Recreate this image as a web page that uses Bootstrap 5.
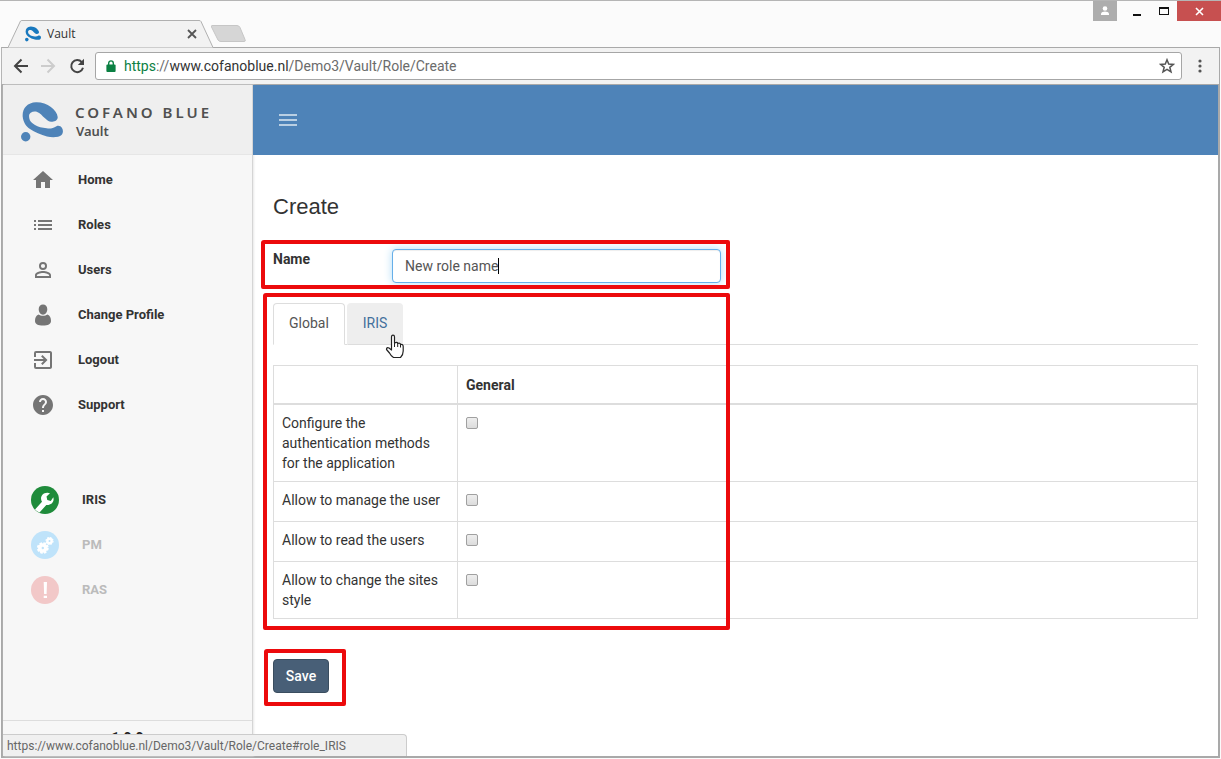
<!DOCTYPE html>
<html lang="en">
<head>
<meta charset="utf-8">
<meta name="viewport" content="width=device-width, initial-scale=1">
<title>Vault</title>
<link href="https://cdn.jsdelivr.net/npm/bootstrap@5.3.0/dist/css/bootstrap.min.css" rel="stylesheet">
<style>
  :root { --ui: "Open Sans", "Noto Sans", sans-serif; --line: #ddd; }
  body { font: 14px/20px Roboto, "Liberation Sans", sans-serif; color: #333; background: #fbfbfb; }
  svg { display: block; flex: none; }
  button { border: 0; background: none; padding: 0; }

  /* browser frame */
  .title-strip { height: 47px; border-top: 1px solid #b5b5b5; padding-left: 8px; font-family: var(--ui); }
  .browser-tab { width: 206px; height: 28px; padding: 0 17px; gap: 6px; font-size: 12px; position: relative; z-index: 1; margin: 0 -3px -1px 0; }
  .tab-shape { position: absolute; inset: 0; z-index: -1; }
  .win-btn { height: 20px; display: flex; align-items: center; justify-content: center; }
  .win-user { width: 24px; background: #adadad; margin-right: 6px; }
  .win-plain { width: 27px; }
  .win-close { width: 44px; background: #c75050; }
  .tool-strip { height: 38px; background: #f2f2f2; border: 1px solid #a9a9a9; border-left-color: #b5b5b5; padding: 0 9px 0 11px; margin: 0 1px; gap: 10px; }
  .nav-keys { gap: 13px; }
  .menu-dots { margin: 0 4px 0 2px; }
  .address { height: 28px; background: #fff; border: 1px solid #a6a6a6; border-radius: 3px; padding: 0 6px 0 10px; font: 14px/20px Roboto, sans-serif; color: #6b6b6b; }
  .address .secure { color: #0b8043; }
  .address .host { color: #333; }
  .viewport { border: solid #a9a9a9; border-width: 0 2px 2px 2px; margin: 0 1px 1px; background: #fff; position: relative; }

  /* application */
  .side { width: 250px; background: #f7f7f7; border-right: 1px solid #d5d5d5; box-shadow: 1px 0 2px #e8e8e8; font-size: 13px; font-weight: 700; }
  .brand { height: 70px; background: #efefef; border-bottom: 1px solid #e6e6e6; padding: 4px 0 0 18px; gap: 12px; color: #505050; }
  .brand-name { font: 600 15px/19px "Noto Sans", "Open Sans", sans-serif; letter-spacing: 3px; }
  .brand-app { font: 600 13px/19px "Noto Sans", "Open Sans", sans-serif; padding-left: 1px; }
  .menu-group { padding: 2px 0 50px; }
  .menu-link { height: 45px; display: flex; align-items: center; color: #333; text-decoration: none; padding-left: 28px; gap: 23px; }
  .menu-link svg { fill: #757575; }
  .menu-link.faded { color: #bbb; }
  .menu-link.app { padding-left: 27px; gap: 22px; }
  .side-foot { height: 36px; border-top: 1px solid #ddd; font: 700 14px/20px Roboto, sans-serif; color: #222; padding-top: 7px; }
  .top-bar { height: 70px; background: #4e83b8; padding-left: 25px; }
  .content-area { padding: 39px 20px 40px 20px; }
  h1 { font: 22px/26px "Liberation Sans", sans-serif; margin: 0; }
  .name-row { margin-top: 29px; width: 448px; position: relative; }
  .name-row label { width: 119px; font-weight: 700; line-height: 20px; }
  .name-row .form-control { width: 329px; height: 34px; font-size: 14px; line-height: 20px; color: #555; padding: 6px 12px; border: 1px solid #66afe9; border-radius: 4px; box-shadow: inset 0 1px 1px #eee, 0 0 8px #b0dcf6; }
  .text-caret { position: absolute; left: 225px; top: 9px; width: 1px; height: 16px; background: #000; }
  .outline { position: absolute; border: 4px solid #ec0a0c; border-radius: 3px 2px 2px 2px; pointer-events: none; z-index: 3; }
  .name-row .outline { inset: -9px -9px -6px -12px; }
  .tab-block { margin-top: 20px; position: relative; }
  .tab-block .outline { top: -10px; left: -10px; bottom: -11px; width: 467px; }
  .save-row { margin-top: 40px; width: 56px; position: relative; }
  .save-row .outline { inset: -10px -17px -13px -9px; }
  .nav-tabs { border-color: var(--line); gap: 2px; }
  .nav-tabs .nav-link { height: 42px; padding: 9px 15px; line-height: 20px; color: #44709c; border-radius: 4px 4px 0 0; }
  .nav-tabs .nav-link.active { color: #555; border-color: var(--line) var(--line) #fff; }
  .nav-tabs .nav-link.pointed { background: #eee; border-color: #eee #eee var(--line); }
  .pointer { position: absolute; left: 112px; top: 31px; z-index: 4; }
  .roles { margin: 20px 0 0; border-color: var(--line); color: #333; --bs-table-color: #333; }
  .roles > :not(caption) > * > * { padding: 8px; border: 1px solid var(--line); height: 40px; }
  .roles > thead > tr > * { border-bottom-width: 2px; height: 38px; font-weight: 700; }
  .roles label { display: block; }
  .roles th:first-child { width: 184px; }
  .roles .form-check-input { width: 12px; height: 12px; margin: 4px 0 0; display: block; border: 1px solid #a0a0a0; border-radius: 2px; background: linear-gradient(#eee, #dcdcdc); }
  .btn-save { width: 56px; height: 34px; background: #485f77; border: 1px solid #3a4d5f; border-radius: 4px; color: #fff; font-size: 14px; font-weight: 500; line-height: 20px; padding: 0; display: block; }
  .btn-save:hover { background: #3d5166; color: #fff; }
  .link-status { position: absolute; left: 0; bottom: 0; width: 404px; height: 22px; background: #f0f0f0; border: solid #ccc; border-width: 1px 1px 0 0; border-radius: 0 4px 0 0; font: 12px/22px Roboto, sans-serif; color: #666; padding-left: 4px; z-index: 5; }
</style>
</head>
<body class="d-flex flex-column min-vh-100">

<svg width="0" height="0" class="position-absolute" aria-hidden="true">
  <symbol id="swirl" viewBox="0 0 42 40">
    <path d="M36.700 15C36 8 26 0 15 .3C6 .6 1 7 1.700 14.700C2.300 20 5 24.500 9 27C13.500 30 20 33 26 34.500C31 35.600 38 35.500 40.500 33C42.300 31 42.300 28 41 26C39.800 24 37.500 23.300 35.500 24.200C32 26.500 29 26.800 25.700 26.300C21 25.800 17 25 14 23C11 21.200 8.500 19 8.300 16.300C7.800 13.500 8 12 9.700 10.700C11.500 9.400 13.700 9.200 15.700 9.700C19.500 11 21 13.800 24 16.300C26 18.300 28.200 19.900 30.700 19.700C34 20 36.900 18 36.700 15Z" fill="currentColor"/>
    <circle cx="4.700" cy="34.700" r="4.700" fill="currentColor"/>
  </symbol>
</svg>

<header class="title-strip d-flex align-items-end justify-content-between">
  <div class="d-flex align-items-end">
    <div class="browser-tab d-flex align-items-center">
      <svg class="tab-shape" width="206" height="28" viewBox="0 0 206 28"><path d="M0 27.500L12.500 1Q13 .5 14 .5H191Q192.500 .5 193 1.500L205 27.500" fill="#f2f2f2" stroke="#b0b0b0"/></svg>
      <svg width="16" height="16" style="color:#1878be"><use href="#swirl"/></svg>
      <span class="flex-grow-1">Vault</span>
      <button aria-label="Close tab"><svg width="10" height="10" viewBox="0 0 10 10" stroke="#555" stroke-width="1.800"><path d="M1 1L9 9M9 1L1 9"/></svg></button>
    </div>
    <button aria-label="New tab" class="mb-1"><svg width="35" height="18" viewBox="0 0 35 18"><path d="M1 .5H26Q28 .5 29 2.500L34 14.500Q35 16.500 33 16.500H10Q8 16.500 7 15L.5 2Q0 .5 1 .5Z" fill="#d6d6d6" stroke="#c6c6c6"/></svg></button>
  </div>
  <div class="d-flex align-self-start">
    <button class="win-btn win-user" aria-label="Profile"><svg width="10" height="10" viewBox="0 0 10 10" fill="#fff"><circle cx="5" cy="2.500" r="2.300"/><path d="M1 9V8C1 6.300 3.500 5.600 5 5.600S9 6.300 9 8V9Z"/></svg></button>
    <button class="win-btn win-plain" aria-label="Minimize"><svg width="10" height="12" viewBox="0 0 10 12"><path d="M1 9h8v2h-8z" fill="#111"/></svg></button>
    <button class="win-btn win-plain" aria-label="Maximize"><svg width="10" height="8" viewBox="0 0 10 8"><path d="M0 0H10V8H0ZM1 2V7H9V2Z" fill="#111" fill-rule="evenodd"/></svg></button>
    <button class="win-btn win-close" aria-label="Close"><svg width="9" height="9" viewBox="0 0 9 9" stroke="#fff" stroke-width="1.600"><path d="M1 1L8 8M8 1L1 8"/></svg></button>
  </div>
</header>

<nav class="tool-strip d-flex align-items-center" aria-label="Browser">
  <div class="nav-keys d-flex align-items-center">
    <button aria-label="Back"><svg width="15" height="16" viewBox="0 0 15 16" fill="none" stroke="#444" stroke-width="2"><path d="M15 8H2M8.500 1.500L2 8L8.500 14.500"/></svg></button>
    <button aria-label="Forward"><svg width="15" height="16" viewBox="0 0 15 16" fill="none" stroke="#ccc" stroke-width="2"><path d="M0 8H13M6.500 1.500L13 8L6.500 14.500"/></svg></button>
    <button aria-label="Reload"><svg width="16" height="16" viewBox="0 0 16 16"><path d="M12.800 4.200A6 6 0 1 0 14 9.800" fill="none" stroke="#444" stroke-width="2"/><path d="M15 .8V7H8.800Z" fill="#444"/></svg></button>
  </div>
  <div class="address d-flex align-items-center flex-grow-1">
    <svg width="10" height="12" viewBox="0 0 10 13"><path d="M1 5H9Q10 5 10 6V12Q10 13 9 13H1Q0 13 0 12V6Q0 5 1 5Z" fill="#0b8043"/><path d="M2.500 6V3.500A2.500 2.500 0 0 1 7.500 3.500V6" fill="none" stroke="#0b8043" stroke-width="1.500"/></svg>
    <span class="ms-2 flex-grow-1"><span class="secure">https</span>://<span class="host">www.cofanoblue.nl</span>/Demo3/Vault/Role/Create</span>
    <button aria-label="Bookmark"><svg width="16" height="16" viewBox="0 0 16 16" fill="none" stroke="#555" stroke-width="1.500"><path d="M8 1.800L9.700 6.100L14.300 6.400L10.800 9.300L12 13.900L8 11.400L4 13.900L5.200 9.300L1.700 6.400L6.300 6.100Z"/></svg></button>
  </div>
  <button aria-label="Browser menu" class="menu-dots"><svg width="12" height="14" viewBox="0 0 12 14" fill="#555"><circle cx="6" cy="2" r="1.600"/><circle cx="6" cy="7" r="1.600"/><circle cx="6" cy="12" r="1.600"/></svg></button>
</nav>

<div class="viewport d-flex flex-grow-1">
  <aside class="side d-flex flex-column flex-shrink-0">
    <div class="brand d-flex align-items-center">
      <svg width="42" height="40" style="color:#4e83b8"><use href="#swirl"/></svg>
      <div><div class="brand-name">COFANO BLUE</div><div class="brand-app">Vault</div></div>
    </div>
    <nav class="flex-grow-1" aria-label="Main">
      <div class="menu-group">
        <a class="menu-link" href="#"><svg width="24" height="24" viewBox="0 0 24 24"><path d="M10 20v-6h4v6h5v-8h3L12 3 2 12h3v8z"/></svg>Home</a>
        <a class="menu-link" href="#"><svg width="24" height="24" viewBox="0 0 24 24"><path d="M3 13h2v-2H3v2zm0 4h2v-2H3v2zm0-8h2V7H3v2zm4 4h14v-2H7v2zm0 4h14v-2H7v2zM7 7v2h14V7H7z"/></svg>Roles</a>
        <a class="menu-link" href="#"><svg width="24" height="24" viewBox="0 0 24 24"><path d="M12 5.900a2.100 2.100 0 1 1 0 4.200 2.100 2.100 0 0 1 0-4.200m0 9c2.970 0 6.100 1.460 6.100 2.100v1.100H5.900V17c0-.64 3.130-2.100 6.100-2.100M12 4a4 4 0 1 0 0 8 4 4 0 0 0 0-8zm0 9c-2.670 0-8 1.340-8 4v3h16v-3c0-2.660-5.330-4-8-4z"/></svg>Users</a>
        <a class="menu-link" href="#"><svg width="24" height="24" viewBox="0 0 24 24"><path d="M12 1.500C14.500 1.500 16.300 3.200 16.300 6.300C16.300 9.300 14.500 11.700 12 11.700S7.700 9.300 7.700 6.300C7.700 3.200 9.500 1.500 12 1.500ZM7.500 11.500C10 13.300 14 13.300 16.500 11.500C19 12.500 20 15 20 18C20 21.200 17 22.500 12 22.500S4 21.200 4 18C4 15 5 12.500 7.500 11.500Z"/></svg>Change Profile</a>
        <a class="menu-link" href="#"><svg width="24" height="24" viewBox="0 0 24 24"><path d="M10.090 15.590L11.500 17l5-5-5-5-1.410 1.410L12.670 11H3v2h9.670l-2.580 2.590zM19 3H5a2 2 0 0 0-2 2v4h2V5h14v14H5v-4H3v4a2 2 0 0 0 2 2h14c1.100 0 2-.9 2-2V5c0-1.100-.9-2-2-2z"/></svg>Logout</a>
        <a class="menu-link" href="#"><svg width="24" height="24" viewBox="0 0 24 24"><path d="M12 2C6.480 2 2 6.480 2 12s4.480 10 10 10 10-4.480 10-10S17.520 2 12 2zm1 17h-2v-2h2v2zm2.070-7.750l-.9.920C13.450 12.900 13 13.500 13 15h-2v-.5c0-1.100.45-2.100 1.170-2.830l1.240-1.260c.37-.36.590-.86.590-1.410 0-1.100-.9-2-2-2s-2 .9-2 2H8c0-2.210 1.790-4 4-4s4 1.790 4 4c0 .88-.36 1.680-.93 2.250z"/></svg>Support</a>
      </div>
      <a class="menu-link app" href="#"><svg width="30" height="30" viewBox="0 0 30 30"><circle cx="15" cy="15" r="14" style="fill:#1f8b3b"/><path d="M5 24.500L12 16.800C9.500 13 12 7.500 17.500 7.700L20 8.300L16.500 11.500L17.300 15L20.800 16L23.300 12.300C24.700 17 21 20.500 16.300 20L9.500 27.500A14 14 0 0 1 5 24.500Z" style="fill:#fff"/></svg>IRIS</a>
      <a class="menu-link app faded" href="#"><svg width="30" height="30" viewBox="0 0 30 30"><circle cx="15" cy="15" r="14" style="fill:#bfe3fa"/><g style="fill:none;stroke:#fff"><circle cx="12.800" cy="18" r="3" stroke-width="3.600"/><circle cx="12.800" cy="18" r="5" stroke-width="1.800" stroke-dasharray="2.500 1.430"/><circle cx="19.500" cy="11" r="2.200" stroke-width="2.400"/><circle cx="19.500" cy="11" r="3.500" stroke-width="1.200" stroke-dasharray="1.600 1.150"/></g></svg>PM</a>
      <a class="menu-link app faded" href="#"><svg width="30" height="30" viewBox="0 0 30 30"><circle cx="15" cy="15" r="14" style="fill:#f2c8c8"/><path d="M13.700 7H17L16.600 19H14.100ZM13.700 20.800H17V23H13.700Z" style="fill:#fff"/></svg>RAS</a>
    </nav>
    <div class="side-foot text-center">1.0.0</div>
  </aside>

  <div class="flex-grow-1">
    <div class="top-bar d-flex align-items-center">
      <button aria-label="Toggle menu"><svg width="20" height="12" viewBox="0 0 20 12" fill="#b9cfe3"><path d="M1 0h18v2H1zM1 5h18v2H1zM1 10h18v2H1z"/></svg></button>
    </div>
    <main class="content-area">
      <h1>Create</h1>
      <form>
        <div class="name-row d-flex">
          <label for="role-name">Name</label>
          <input type="text" class="form-control" id="role-name" value="New role name">
          <span class="text-caret"></span>
          <span class="outline"></span>
        </div>
        <div class="tab-block">
          <ul class="nav nav-tabs">
            <li class="nav-item"><a class="nav-link active" href="#role_Global">Global</a></li>
            <li class="nav-item"><a class="nav-link pointed" href="#role_IRIS">IRIS</a></li>
          </ul>
          <table class="table table-bordered roles">
            <thead><tr><th>&nbsp;</th><th>General</th></tr></thead>
            <tbody>
              <tr><td><label for="p1">Configure the authentication methods for the application</label></td><td><input class="form-check-input" type="checkbox" id="p1"></td></tr>
              <tr><td><label for="p2">Allow to manage the user</label></td><td><input class="form-check-input" type="checkbox" id="p2"></td></tr>
              <tr><td><label for="p3">Allow to read the users</label></td><td><input class="form-check-input" type="checkbox" id="p3"></td></tr>
              <tr><td><label for="p4">Allow to change the sites style</label></td><td><input class="form-check-input" type="checkbox" id="p4"></td></tr>
            </tbody>
          </table>
          <span class="outline"></span>
          <svg class="pointer" width="20" height="25" viewBox="0 0 20 25"><path d="M6.500 15V3Q6.500 1.200 8 1.200T9.500 3V9Q12.500 7.500 12.700 9.500Q15 8.500 15.500 10.500Q18.200 10 18.200 12.500V17Q18.200 21 15.500 23.500H8.500Q6 22 4.500 19L1.500 15.500Q1.500 13 4 14L6.500 16Z" fill="#fff" stroke="#222" stroke-width="1.200" stroke-linejoin="round"/><path d="M9.500 8.500V13M12.700 9.500V13M15.500 10.500V13.500" stroke="#222" fill="none"/></svg>
        </div>
        <div class="save-row">
          <button type="button" class="btn btn-save">Save</button>
          <span class="outline"></span>
        </div>
      </form>
    </main>
  </div>
  <div class="link-status">https://www.cofanoblue.nl/Demo3/Vault/Role/Create#role_IRIS</div>
</div>

<script src="https://cdn.jsdelivr.net/npm/bootstrap@5.3.0/dist/js/bootstrap.bundle.min.js"></script>
</body>
</html>
